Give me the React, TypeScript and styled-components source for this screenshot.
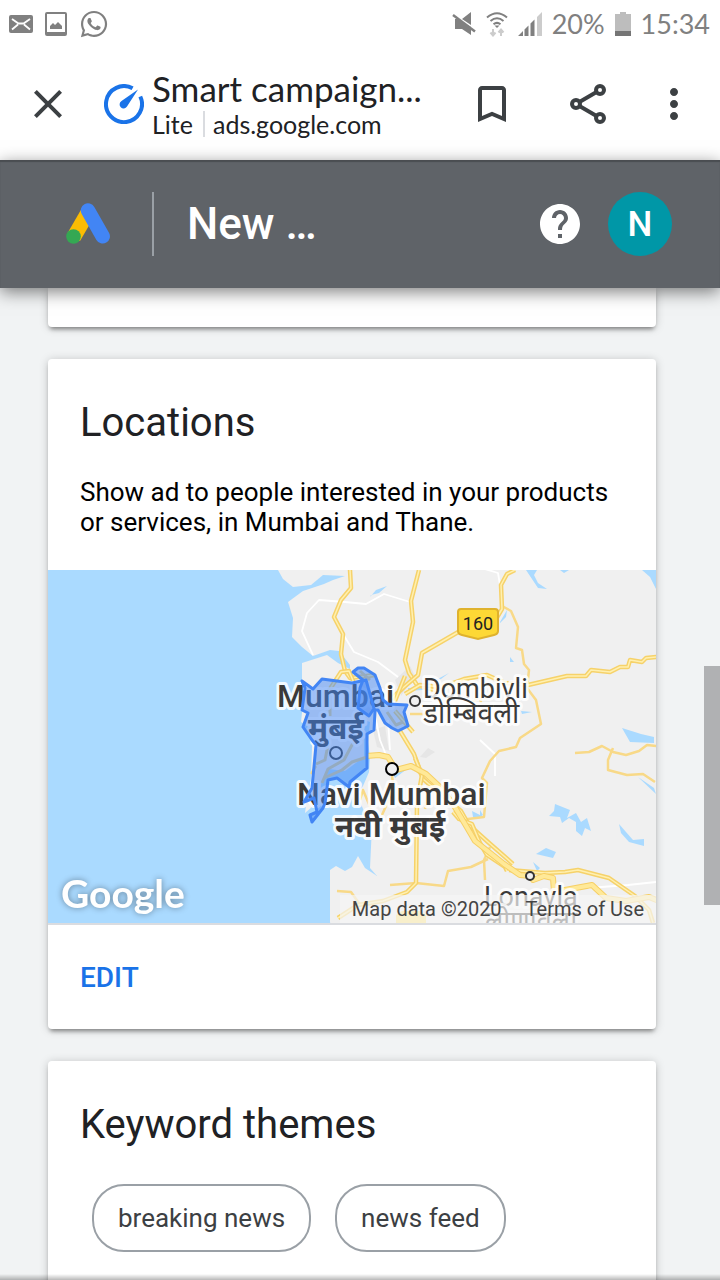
import React from "react";
import styled, { createGlobalStyle } from "styled-components";
import { MdBookmarkBorder, MdClose, MdHelp, MdMoreVert } from "react-icons/md";
import { FaWhatsapp } from "react-icons/fa";

const GlobalStyle = createGlobalStyle`
  * { box-sizing: border-box; }
  body { margin: 0; background: #f1f3f4; font-family: Roboto, "Noto Sans", sans-serif; color: #202124; }
  button { font: inherit; background: none; border: 0; padding: 0; cursor: pointer; }
  svg { display: block; flex: none; }
`;

const Screen = styled.div`
  display: flex;
  flex-direction: column;
  height: 100vh;
  overflow: hidden;
`;

const StatusBar = styled.div`
  display: flex;
  align-items: center;
  justify-content: space-between;
  height: 48px;
  padding: 0 10px 0 9px;
  background: #fff;
  color: #808080;
  font: 400 27px/48px Lato, sans-serif;
`;

const StatusGroup = styled.div<{ $gap: number }>`
  display: flex;
  align-items: center;
  gap: ${(p) => p.$gap}px;
`;

const BrowserBar = styled.header`
  display: flex;
  align-items: center;
  height: 112px;
  padding: 0 22px 0 24px;
  background: #fff;
  color: #3c4043;
`;

const IconButton = styled.button<{ $end?: number }>`
  display: flex;
  align-items: center;
  justify-content: center;
  flex: none;
  width: 48px;
  height: 48px;
  margin-right: ${(p) => p.$end ?? 0}px;
  color: inherit;
`;

const PageInfo = styled.div`
  display: flex;
  align-items: center;
  gap: 8px;
  flex: 1;
  min-width: 0;
  margin-left: 32px;
  color: #202124;
  font-family: Lato, sans-serif;
`;

const PageText = styled.div`
  min-width: 0;
`;

const PageTitle = styled.div`
  font-size: 35px;
  line-height: 40px;
  white-space: nowrap;
`;

const PageHost = styled.div`
  display: flex;
  align-items: center;
  font-size: 25px;
  line-height: 32px;
  white-space: nowrap;
`;

const LiteTag = styled.span`
  margin-right: 8px;
  padding-right: 10px;
  border-right: 2px solid #dadce0;
  line-height: 26px;
`;

const AdsBar = styled.div`
  position: relative;
  z-index: 1;
  display: flex;
  align-items: center;
  flex: none;
  height: 128px;
  padding: 0 48px 0 66px;
  background: #5f6368;
  box-shadow: inset 0 2px 1px #4a4d51, 0 4px 16px rgba(0, 0, 0, 0.5);
  color: #fff;
`;

const AdsTitle = styled.h1`
  flex: 1;
  margin: 0 0 0 42px;
  padding-left: 33px;
  border-left: 2px solid #9aa0a6;
  font-size: 44px;
  font-weight: 500;
  line-height: 64px;
`;

const Avatar = styled.button`
  width: 64px;
  height: 64px;
  margin-left: 24px;
  border-radius: 50%;
  background: #0097a7;
  color: #fff;
  && { font-size: 35px; font-weight: 500; }
`;

const Content = styled.main`
  display: flex;
  flex-direction: column;
  flex: 1;
  gap: 32px;
  min-height: 0;
  padding: 0 64px 0 48px;
  overflow: hidden;
`;

const Card = styled.section<{ $minHeight?: number; $flatTop?: boolean }>`
  flex: none;
  min-height: ${(p) => p.$minHeight ?? 0}px;
  border-radius: ${(p) => (p.$flatTop ? "0 0 4px 4px" : "4px")};
  background: #fff;
  box-shadow: 0 4px 4px -2px rgba(0, 0, 0, 0.4), 0 1px 10px rgba(0, 0, 0, 0.2);
`;

const CardTitle = styled.h2`
  margin: 0;
  padding: 40px 32px 0;
  font-size: 40px;
  font-weight: 400;
  line-height: 48px;
`;

const Description = styled.p`
  margin: 0;
  padding: 30px 32px 33px;
  color: #000;
  font-size: 26px;
  line-height: 30px;
`;

const MapFrame = styled.div`
  position: relative;
  height: 355px;
  border-bottom: 2px solid #dadce0;
  overflow: hidden;
`;

const MapCredits = styled.div`
  position: absolute;
  right: 0;
  bottom: 0;
  display: flex;
  gap: 24px;
  padding: 0 12px;
  background: rgba(245, 245, 245, 0.7);
  color: #444;
  font-size: 20px;
  line-height: 28px;

  a { color: inherit; text-decoration: none; }
`;

const CardFooter = styled.div`
  display: flex;
  align-items: center;
  height: 104px;
  padding: 0 32px;
`;

const TextButton = styled.button`
  color: #1a73e8;
  && { font-size: 28px; font-weight: 500; }
`;

const Chips = styled.div`
  display: flex;
  flex-wrap: wrap;
  gap: 24px;
  padding: 35px 44px;
`;

const Chip = styled.button`
  height: 68px;
  && {
    padding: 0 24px;
    border: 2px solid #9aa0a6;
    font-size: 26px;
    line-height: 30px;
  }
  border-radius: 32px;
  color: #3c4043;
`;

const ScrollThumb = styled.div`
  position: fixed;
  z-index: 2;
  top: 52%;
  right: 0;
  width: 16px;
  height: 239px;
  background: #b0b1b3;
`;

const BottomShade = styled.div`
  position: fixed;
  right: 0;
  bottom: 0;
  left: 0;
  height: 6px;
  background: linear-gradient(rgba(0, 0, 0, 0), rgba(0, 0, 0, 0.28));
`;

const MapLabel = styled.text<{ $size: number; $weight?: number }>`
  font-family: Roboto, "Noto Sans", "Noto Sans Devanagari", sans-serif;
  font-size: ${(p) => p.$size}px;
  font-weight: ${(p) => p.$weight ?? 400};
  fill: #3a3a3a;
  stroke: #fff;
  stroke-width: 6px;
  stroke-linejoin: round;
  stroke-opacity: 0.85;
  paint-order: stroke;
`;

const MapLogo = styled.text`
  font-family: Lato, sans-serif;
  font-size: 39px;
  font-weight: 700;
  fill: #fff;
  filter: drop-shadow(0 0 3px rgba(0, 0, 0, 0.4));
`;

const MailIcon = () => (
  <svg width="24" height="18" viewBox="0 0 24 18">
    <rect width="24" height="18" rx="2" fill="#808080" />
    <path d="M3 4l6.500 4.500h5L21 4M3 14.500l6-5M21 14.500l-6-5" fill="none" stroke="#fff" strokeWidth="1.800" />
  </svg>
);

const PictureIcon = () => (
  <svg width="22" height="24" viewBox="0 0 22 24">
    <rect x="1" y="1" width="20" height="22" rx="1" fill="none" stroke="#808080" strokeWidth="2" />
    <path d="M1 20h20v3H1zM5 17v-3l3-3 2 2 3-3 4 4v3z" fill="#808080" />
  </svg>
);

const MuteIcon = () => (
  <svg width="24" height="26" viewBox="0 0 24 26">
    <path d="M19 1v13L10 8zM3 8h3l13 8v8l-9-6H3z" fill="#808080" />
    <path d="M1 4l22 16.500" stroke="#808080" strokeWidth="2.500" />
  </svg>
);

const WifiIcon = () => (
  <svg width="22" height="26" viewBox="0 0 22 26">
    <g fill="none" stroke="#808080" strokeWidth="2">
      <path d="M1 6.500Q11-2 21 6.500M4.500 10Q11 4.500 17.500 10M7.500 13.300Q11 10.500 14.500 13.300" />
    </g>
    <path d="M8.500 14.500h5L11 17z" fill="#808080" />
    <path d="M7 18v6M4.500 21.500L7 24.500l2.500-3M15 25v-6M12.500 21.500l2.500-3 2.500 3" fill="none" stroke="#ccc" strokeWidth="2" />
  </svg>
);

const SignalIcon = () => (
  <svg width="24" height="24" viewBox="0 0 24 24">
    <path d="M0 24l5-5v5zM6.500 17.500l4-4V24h-4zM12.500 11.500l4-4V24h-4z" fill="#808080" />
    <path d="M19 5l5-5v24h-5z" fill="#ccc" />
  </svg>
);

const BatteryIcon = () => (
  <svg width="16" height="24" viewBox="0 0 16 24">
    <path d="M5 0h6v2h5v22H0V2h5z" fill="#bdbdbd" />
    <path d="M0 19h16v5H0z" fill="#757575" />
  </svg>
);

const LiteIcon = () => (
  <svg width="40" height="40" viewBox="0 0 40 40">
    <path d="M28.600 4.300A18 18 0 1 0 36.300 12.500" fill="none" stroke="#1a73e8" strokeWidth="4" />
    <path d="M34 5.500L23 22.500a4 4 0 1 1-5.500-5.500z" fill="#1a73e8" />
  </svg>
);

const ShareIcon = () => (
  <svg width="40" height="40" viewBox="0 0 40 40">
    <path d="M8 20L32 6M8 20l24 14" stroke="#3c4043" strokeWidth="4" />
    <g fill="#fff" stroke="#3c4043" strokeWidth="4">
      <circle cx="8" cy="20" r="4" />
      <circle cx="32" cy="6" r="4" />
      <circle cx="32" cy="34" r="4" />
    </g>
  </svg>
);

const AdsLogo = () => (
  <svg width="44" height="42" viewBox="0 0 44 42" aria-label="Google Ads">
    <path d="M16 5L1 31l13 7L28 14z" fill="#fbbc04" />
    <path d="M22 7.500l14.700 25.800" stroke="#4285f4" strokeWidth="14.500" strokeLinecap="round" />
    <circle cx="7.500" cy="33.500" r="7.300" fill="#34a853" />
  </svg>
);

const waters = [
  "M370 597l6-7 11-4-8 7-8 2z",
  "M526 570l12 18 9 1-9-6-4-8 3-5z",
  "M642 570h14v19l-6-12z",
  "M500 622l7-12-1 7-6 6zM510 657l4 5h-4z",
  "M434 681l15-8-8 6zM408 688l20-1-6 3-14 1zM521 711l11 1-10 2z",
  "M622 728l19 6 13 3v6l-24-1z",
  "M555 804l15 6-3 8 9-5 5 9 6-4 4 13-6-3-3 8-6-5v-9l-7-4-7 5-2-6-11-1 5-5z",
  "M619 824l14 16 11-1v7l-15-4-8-9z",
  "M536 854l10-6 10 4-3 6z",
  "M533 862l7 6-3 3zM638 777l16 11 2 6z",
  "M472 811l8 4v-5l3 5-4 3-6-1zM393 774l14-5-12 9zM560 570l9 0-5 3z",
];

const majorRoads = [
  "M350 570l1 18-10 12-7 17 9 17-2 20 4 17 5 7 25-3",
  "M419 570l-8 31 2 21-8 38 4 13 8 12 21 6",
  "M515 570l-8 4-6 11 1 24-6 10-36 12-38 22-4 22-14 12-13 12",
  "M395 701l10-25M405 694l15-9 22 2 22-8 23-4 18 8 23 2 39-9h19l5-6 19 2 10-5h8l2-7 12 2 4-4 11-1",
  "M328 692l13-20 8-1 5 12M413 732l-18-21M400 731l14 23 9 25 38 32 8 14 19 17 25 22",
  "M415 758l7 17-5 28-1 80-9 9-24 9-25 4-20 13M453 812l6 7 13 5 8 19 7 12 18 12 2 4",
  "M509 870l36 3 20-1 13-2 31 8 26 18 14 14 4 13",
];
const trunkRoads = [
  "M366 756l13-1 9 2 8 13 15-4 15 8 15 14 12 16 12 20 10 17 29 23 16 11 10 1 3 4 11-4 9 2 1 14 38-7 14 13 20 3 23-4 22 9 15 16",
];
const minorRoads = [
  "M502 606l9 5 7 16-2 21 6 2 2 14 5 6-2 18 9 12 5 24-21 14-4 9-17 4-9 10-8 17 5 5-3 34-24 3",
  "M575 753l14-1 13-6 11 6 13 3 13-4 8-6 18 2M613 748l-5 12v10l19 5 16-1 12 8",
  "M337 891l14 1 10 14M416 883l28 3 4-15 23-4 17-8M390 885l26-2",
  "M360 800l3-10 8 19M382 815l8-18-4-10M425 809l3-25-13-16M395 800l-3-24M485 880l-1-20 6-13",
  "M460 715l20-20 1 8M316 766l-5 8M410 714h25",
];
const localRoads = [
  "M313 655l-11-24 5-18 12-13 26 2 21 2 18-10 26 8M343 634l11 18 24 10 20 15M500 585l-2-12-30-9M375 715l5 25 8 20M388 720l2 30M480 740l15 14v22M588 888l40-3 28-3",
];

const coast =
  "M278 570l5 9 10 8 18-2 12-10 22 1-12 4-9 4-21 7-15 11 5 16-1 19 10 10 11 9 17-6 9 1 11 14 0 4-12-6-11-8-25 8v16l1 25-2 18 12 7-1 18-1 32-4 20-2 14 15-13 1-16 7-15 17 2 19-14v-28l3-8 3 1-2 20 2 15-1 15-6 14-6 8 4 10 5 12 6 10-2 42 7 8-12-8-7-12-6 11-7 4-9-5-6 4v52l3 11H660V565z";

const mumbaiArea =
  "M302 681L313 689L322 679L352 683L366 680L375 712L374 730L367 734V768L350 782L349 787L337 778L328 780L327 788L325 803L323 808L312 822L310 815L317 812L314 798L304 802L312 788L316 745L312 740L303 727L308 713L302 710L305 688Z";

const thaneArea =
  "M353 672L358 668H364L375 675L380 688L383 700L388 704L407 705L404 712L408 726L398 731L392 728L385 723L378 710L373 710L369 716L358 708L360 688L363 680Z";

const CoverageMap = () => (
  <svg width="100%" height="353" viewBox="48 570 608 353" preserveAspectRatio="xMidYMid slice" role="img" aria-label="Map of Mumbai and Thane">
    <path d="M0 500h800v500H0z" fill="#aadaff" />
    <path d={coast} fill="#f0f0f0" />
    <path d="M395 680l15-14 5 10-14 20zM420 757l8-9 7 4-9 6zM373 730l12-4 4 25-12-4z" fill="#e6e6e6" />
    {waters.map((d) => (
      <path key={d} d={d} fill="#aadaff" />
    ))}
    <g fill="none" strokeLinejoin="round">
      {localRoads.map((d) => (
        <path key={d} d={d} stroke="#fff" strokeWidth="1.800" />
      ))}
      {minorRoads.map((d) => (
        <path key={d} d={d} stroke="#f8d988" strokeWidth="2.500" />
      ))}
      {majorRoads.map((d) => (
        <g key={d}>
          <path d={d} stroke="#f6d26a" strokeWidth="4.500" />
          <path d={d} stroke="#fff0b0" strokeWidth="1.500" />
        </g>
      ))}
      {trunkRoads.map((d) => (
        <g key={d}>
          <path d={d} stroke="#f6cf65" strokeWidth="6" />
          <path d={d} stroke="#ffe998" strokeWidth="4" />
        </g>
      ))}
      <path d="M316 764l9-4 3-15M322 783l6-14 16-9 9-17M324 778l18-8 10-8 15-5M330 688v28M360 671l10 9M387 712l9 13 7-3" stroke="#e8d08a" strokeWidth="3" />
    </g>
    <path d="M396 923v-8l6-4h18l6 4v8z" fill="#ffe168" />
    <path d="M461 609h34q3 0 3 3v19q0 3-4 4l-16 4-16-4q-4-1-4-4v-19q0-3 3-3z" fill="#fdd835" stroke="#dfb22e" strokeWidth="2" />
    <text x="478" y="630" fontFamily="Roboto, sans-serif" fontSize="18" textAnchor="middle" fill="#222">160</text>

    <MapLabel x="277" y="707" $size={32} $weight={500}>Mumbai</MapLabel>
    <MapLabel x="308" y="739" $size={31} $weight={700}>मुंबई</MapLabel>
    <MapLabel x="297" y="805" $size={32} $weight={500}>Navi Mumbai</MapLabel>
    <MapLabel x="335" y="837" $size={31} $weight={700}>नवी मुंबई</MapLabel>
    <MapLabel x="423" y="698" $size={27}>Dombivli</MapLabel>
    <MapLabel x="423" y="723" $size={28}>डोम्बिवली</MapLabel>
    <MapLabel x="484" y="906" $size={27}>Lonavla</MapLabel>
    <MapLabel x="485" y="930" $size={27}>लोणावला</MapLabel>

    <g fill="#f0f0f0" stroke="#333" strokeWidth="2">
      <circle cx="415" cy="701" r="5" />
      <circle cx="336" cy="753" r="6" />
      <circle cx="392" cy="769" r="6" stroke="#000" />
      <circle cx="530" cy="876" r="4" />
    </g>
    <g fill="#4285f4" fillOpacity="0.5" stroke="#4285f4" strokeWidth="3" strokeLinejoin="round">
      <path d={mumbaiArea} />
      <path d={thaneArea} />
    </g>
    <MapLogo x="61" y="908">Google</MapLogo>
  </svg>
);

export default function App() {
  return (
    <Screen>
      <GlobalStyle />
      <StatusBar>
        <StatusGroup $gap={12}>
          <MailIcon />
          <PictureIcon />
          <FaWhatsapp size={30} />
        </StatusGroup>
        <StatusGroup $gap={10}>
          <MuteIcon />
          <WifiIcon />
          <SignalIcon />
          <span>20%</span>
          <BatteryIcon />
          <span>15:34</span>
        </StatusGroup>
      </StatusBar>
      <BrowserBar>
        <IconButton aria-label="Close">
          <MdClose size={48} />
        </IconButton>
        <PageInfo>
          <LiteIcon />
          <PageText>
            <PageTitle>Smart campaign...</PageTitle>
            <PageHost>
              <LiteTag>Lite</LiteTag>
              <span>ads.google.com</span>
            </PageHost>
          </PageText>
        </PageInfo>
        <IconButton aria-label="Bookmark" $end={48}>
          <MdBookmarkBorder size={48} />
        </IconButton>
        <IconButton aria-label="Share" $end={38}>
          <ShareIcon />
        </IconButton>
        <IconButton aria-label="More options">
          <MdMoreVert size={48} />
        </IconButton>
      </BrowserBar>
      <AdsBar>
        <AdsLogo />
        <AdsTitle>New …</AdsTitle>
        <IconButton aria-label="Help">
          <MdHelp size={48} />
        </IconButton>
        <Avatar aria-label="Account N">N</Avatar>
      </AdsBar>
      <Content>
        <Card $minHeight={39} $flatTop />
        <Card>
          <CardTitle>Locations</CardTitle>
          <Description>
            Show ad to people interested in your products or services, in Mumbai and Thane.
          </Description>
          <MapFrame>
            <CoverageMap />
            <MapCredits>
              <span>Map data ©2020</span>
              <a href="#terms">Terms of Use</a>
            </MapCredits>
          </MapFrame>
          <CardFooter>
            <TextButton>EDIT</TextButton>
          </CardFooter>
        </Card>
        <Card $minHeight={300}>
          <CardTitle>Keyword themes</CardTitle>
          <Chips>
            <Chip>breaking news</Chip>
            <Chip>news feed</Chip>
          </Chips>
        </Card>
      </Content>
      <ScrollThumb />
      <BottomShade />
    </Screen>
  );
}
